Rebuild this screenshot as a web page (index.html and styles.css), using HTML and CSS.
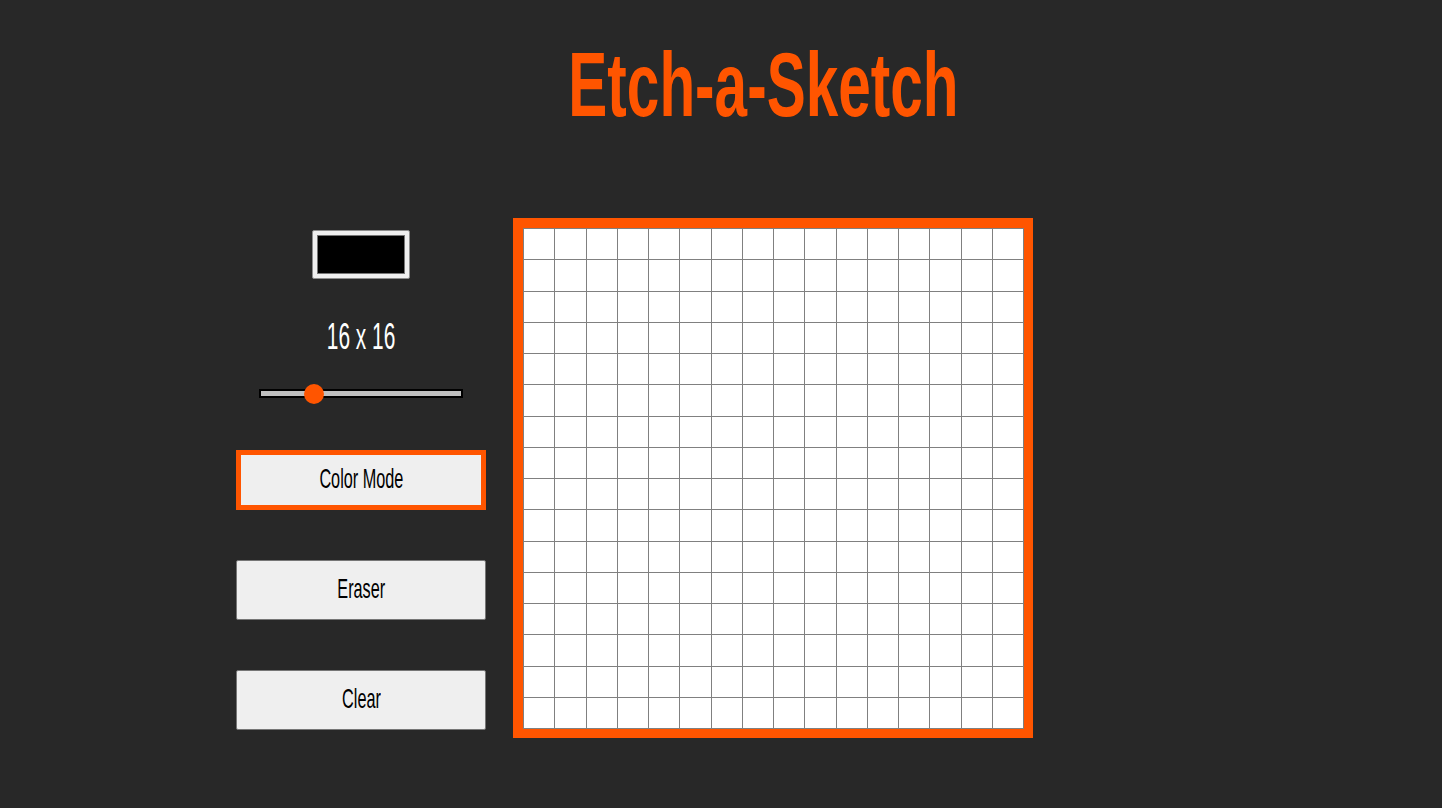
FILE: index.html
```html
<!DOCTYPE html>
<html lang="en">
<head>
<meta charset="utf-8">
<title>Etch-a-Sketch</title>
<link rel="stylesheet" href="styles.css">
</head>
<body>
<div class="page">
  <header class="header">
    <h1 class="title"><span class="title-text">Etch-a-Sketch</span></h1>
  </header>
  <main class="main">
    <aside class="controls">
      <div class="swatch"><div class="swatch-fill"></div></div>
      <div class="size-label"><span class="squeeze">16 x 16</span></div>
      <div class="slider">
        <div class="slider-thumb"></div>
      </div>
      <button class="btn btn-active"><span class="squeeze">Color Mode</span></button>
      <button class="btn"><span class="squeeze">Eraser</span></button>
      <button class="btn"><span class="squeeze">Clear</span></button>
    </aside>
    <section class="board">
      <div class="grid" id="grid"></div>
    </section>
  </main>
</div>
<script>
  var g = document.getElementById('grid');
  for (var i = 0; i < 256; i++) {
    var c = document.createElement('div');
    c.className = 'cell';
    g.appendChild(c);
  }
</script>
</body>
</html>
```
FILE: styles.css
```css
html, body {
  margin: 0;
  padding: 0;
}
body {
  background: #282828;
  font-family: "Liberation Sans", Arial, sans-serif;
  width: 1442px;
  height: 808px;
  overflow: hidden;
}
.page {
  margin-left: 236px;
  width: 797px;
  padding-top: 39px;
}
.header {
  display: flex;
  justify-content: center;
  padding-left: 257px;
}
.title {
  margin: 0;
  font-size: 91px;
  line-height: 91px;
  font-weight: 700;
  color: #ff5500;
  white-space: nowrap;
}
.title-text {
  display: inline-block;
  transform: scaleX(0.643);
}
.main {
  display: flex;
  align-items: flex-start;
  gap: 27px;
  margin-top: 88px;
}
.controls {
  width: 250px;
  display: flex;
  flex-direction: column;
  align-items: center;
  margin-top: 12px;
}
.swatch {
  width: 98px;
  height: 49px;
  box-sizing: border-box;
  border: 1px solid #8d8d8d;
  background: #efefef;
  padding: 4px 4px;
  border-radius: 2px;
}
.swatch-fill {
  width: 100%;
  height: 100%;
  box-sizing: border-box;
  background: #000;
  border: 1px solid #767676;
}
.size-label {
  margin-top: 40px;
  height: 36px;
  font-size: 36px;
  line-height: 36px;
  color: #ffffff;
  white-space: nowrap;
}
.squeeze {
  display: inline-block;
  transform: scaleX(0.58);
  white-space: nowrap;
}
.slider {
  position: relative;
  margin-top: 34px;
  width: 204px;
  height: 9px;
  box-sizing: border-box;
  border: 2px solid #000;
  background: #c0c0c0;
}
.slider-thumb {
  position: absolute;
  left: 43px;
  top: -7.5px;
  width: 20px;
  height: 20px;
  border-radius: 50%;
  background: #ff5500;
}
.btn {
  display: flex;
  align-items: center;
  justify-content: center;
  width: 250px;
  height: 60px;
  box-sizing: border-box;
  margin: 50px 0 0 0;
  padding: 0 0 3px 0;
  background: #efefef;
  border: 1px solid #767676;
  border-radius: 2px;
  font-family: "Liberation Sans", Arial, sans-serif;
  font-size: 28px;
  line-height: 28px;
  color: #000;
  cursor: pointer;
}
.btn-active {
  margin-top: 52px;
  border: 5px solid #ff5500;
  border-radius: 0;
}
.board {
  border: 10px solid #ff5500;
  border-right-width: 9px;
  border-bottom-width: 9px;
  background: #fff;
}
.grid {
  width: 500px;
  height: 500px;
  display: grid;
  grid-template-columns: repeat(16, 1fr);
  grid-template-rows: repeat(16, 1fr);
  border-right: 1px solid #808080;
  border-bottom: 1px solid #808080;
}
.cell {
  box-sizing: border-box;
  border-left: 1px solid #808080;
  border-top: 1px solid #808080;
  background: #fff;
}
```
